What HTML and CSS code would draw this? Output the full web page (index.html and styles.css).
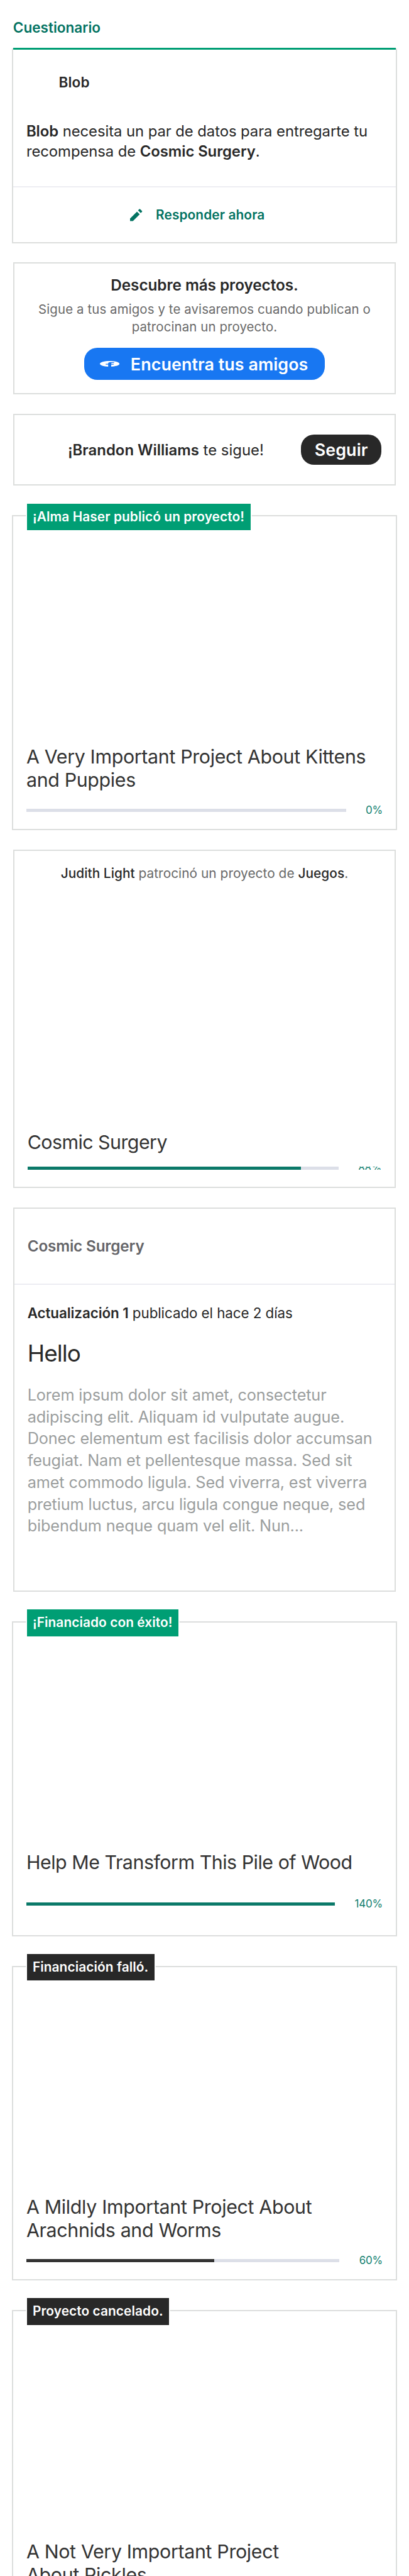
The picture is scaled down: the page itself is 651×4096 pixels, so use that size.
FILE: index.html
```html
<!DOCTYPE html>
<html lang="es">
<head>
<meta charset="utf-8">
<title>Actividad</title>
<link rel="stylesheet" href="styles.css">
</head>
<body>
<main class="feed">
  <h2 class="feed-heading">Cuestionario</h2>

  <section class="card survey">
    <div class="survey-creator">Blob</div>
    <p class="survey-text"><b>Blob</b> necesita un par de datos para entregarte tu<br>recompensa de <b>Cosmic Surgery</b>.</p>
    <div class="survey-action">
      <svg class="pencil" viewBox="0 0 22.5 22.5"><path d="M0 22.5V17.8L12.7 5.1L17.7 10.1L5.3 22.5ZM14.6 2.9L17 .5Q17.7 -.1 18.4 .5L22 4.1Q22.6 4.8 22 5.5L19.6 7.9Z"/></svg>
      <span>Responder ahora</span>
    </div>
  </section>

  <section class="card friends">
    <h3 class="friends-title">Descubre más proyectos.</h3>
    <p class="friends-text">Sigue a tus amigos y te avisaremos cuando publican o<br>patrocinan un proyecto.</p>
    <div class="button facebook">
      <svg class="facebook-icon" viewBox="0 0 24 24" preserveAspectRatio="none"><path d="M24 12.073c0-6.627-5.373-12-12-12s-12 5.373-12 12c0 5.99 4.388 10.954 10.125 11.854v-8.385H7.078v-3.47h3.047V9.43c0-3.007 1.792-4.669 4.533-4.669 1.312 0 2.686.235 2.686.235v2.953H15.83c-1.491 0-1.956.925-1.956 1.874v2.25h3.328l-.532 3.47h-2.796v8.385C19.612 23.027 24 18.062 24 12.073z"/></svg>
      <span>Encuentra tus amigos</span>
    </div>
  </section>

  <section class="card follow">
    <p class="follow-text"><b>¡Brandon Williams</b> te sigue!</p>
    <div class="button dark">Seguir</div>
  </section>

  <section class="card project">
    <div class="badge">¡Alma Haser publicó un proyecto!</div>
    <h3 class="title">A Very Important Project About Kittens<br>and Puppies</h3>
    <div class="progress"><div class="track"></div><span class="percent">0%</span></div>
  </section>

  <section class="card backing">
    <p class="backing-text"><b>Judith Light</b> patrocinó un proyecto de <b>Juegos</b>.</p>
    <h3 class="title">Cosmic Surgery</h3>
    <div class="progress"><div class="track"><div class="fill" style="width:88%"></div></div><span class="percent">88%</span></div>
  </section>

  <section class="card update">
    <div class="update-project">Cosmic Surgery</div>
    <div class="update-content">
      <p class="update-date"><b>Actualización 1</b> publicado el hace 2 días</p>
      <h3 class="update-title">Hello</h3>
      <p class="update-body">Lorem ipsum dolor sit amet, consectetur<br>adipiscing elit. Aliquam id vulputate augue.<br>Donec elementum est facilisis dolor accumsan<br>feugiat. Nam et pellentesque massa. Sed sit<br>amet commodo ligula. Sed viverra, est viverra<br>pretium luctus, arcu ligula congue neque, sed<br>bibendum neque quam vel elit. Nun...</p>
    </div>
  </section>

  <section class="card project single">
    <div class="badge">¡Financiado con éxito!</div>
    <h3 class="title">Help Me Transform This Pile of Wood</h3>
    <div class="progress"><div class="track"><div class="fill" style="width:100%"></div></div><span class="percent">140%</span></div>
  </section>

  <section class="card project">
    <div class="badge ended">Financiación falló.</div>
    <h3 class="title">A Mildly Important Project About<br>Arachnids and Worms</h3>
    <div class="progress"><div class="track"><div class="fill ended" style="width:60%"></div></div><span class="percent">60%</span></div>
  </section>

  <section class="card project">
    <div class="badge ended">Proyecto cancelado.</div>
    <h3 class="title">A Not Very Important Project<br>About Pickles</h3>
  </section>
</main>
</body>
</html>
```
FILE: styles.css
```css
/* 1rem is ten design pixels */
html { font-size: 8.68px; overflow: hidden; }
* { box-sizing: border-box; }
body { margin: 0; height: 4096px; overflow: hidden; background: #fff; color: #282828; font-family: Inter, "Liberation Sans", sans-serif; }
h2, h3, p { margin: 0; font-weight: 400; }
b { font-weight: 600; }
.feed { display: flex; flex-direction: column; white-space: nowrap; }
.feed-heading { height: 8.9rem; padding: 3.4rem 0 0 2.4rem; font-size: 2.6rem; font-weight: 600; line-height: 3.2rem; color: #037362; }

.card { position: relative; flex: none; margin: 0 2.4rem; border: 2px solid #dcdedd; background: #fff; }
.button { display: flex; align-items: center; border-radius: 2.4rem; color: #fff; font-size: 3.1rem; font-weight: 600; letter-spacing: .002em; }

.survey { height: 35.7rem; margin: 0 2.2rem; border-top: 0; padding-top: 4.35rem; }
.survey::before { content: ""; position: absolute; top: -.2rem; left: 0; right: 0; height: .4rem; background: #009e74; }
.survey-creator { padding-left: 8.35rem; font-size: 2.6rem; font-weight: 600; line-height: 3.6rem; letter-spacing: .005em; }
.survey-text { margin-top: 5.4rem; padding: 0 0 4.5rem 2.4rem; font-size: 2.75rem; line-height: 3.7rem; letter-spacing: -.003em; border-bottom: 2px solid #ededf2; }
.survey-action { display: flex; align-items: center; gap: 2.5rem; height: 9.9rem; padding-left: 21.4rem; font-size: 2.4rem; font-weight: 600; letter-spacing: .005em; color: #037362; }
.pencil { width: 2.25rem; height: 2.25rem; fill: currentColor; overflow: visible; }

.friends { display: flex; flex-direction: column; align-items: center; height: 24.2rem; margin-top: 3.4rem; padding-top: 2.36rem; text-align: center; }
.friends-title { font-size: 2.8rem; font-weight: 600; line-height: 3.4rem; letter-spacing: -.002em; }
.friends-text { margin-top: 1.08rem; font-size: 2.35rem; line-height: 3.2rem; letter-spacing: .006em; color: #696969; }
.facebook { gap: 2.05rem; width: 44.2rem; height: 5.9rem; margin-top: 2.26rem; padding-left: 2.9rem; background: #1877f2; }
.facebook-icon { width: 3.6rem; height: 1.03rem; fill: #fff; }

.follow { display: flex; align-items: center; justify-content: space-between; height: 13.2rem; margin-top: 3.6rem; padding: 0 2.4rem 0 9.8rem; }
.follow-text { font-size: 2.75rem; letter-spacing: .001em; }
.dark { justify-content: center; width: 14.8rem; height: 5.6rem; background: #282828; }

.title { font-size: 3.5rem; line-height: 4.3rem; letter-spacing: -.0115em; color: #333; }
.progress { display: flex; align-items: center; gap: 3.6rem; line-height: 2.4rem; }
.track { flex: 1; height: .6rem; background: #dcdfe8; }
.fill { height: 100%; background: #0b7969; }
.fill.ended { background: #333; }
.percent { font-size: 1.96rem; letter-spacing: -.01em; color: #12806f; }

.project { height: 57.7rem; margin: 5.4rem 2.2rem 0; padding: 41.88rem 2.4rem 0; }
.project .progress { margin-top: 2.1rem; }
.single .progress { margin-top: 4.2rem; }
.single .title { letter-spacing: -.016em; }
.badge { position: absolute; top: -2.4rem; left: 2.55rem; padding: 0 1.1rem 0 1rem; background: #009e74; color: #fff; font-size: 2.4rem; font-weight: 600; line-height: 4.9rem; letter-spacing: .004em; box-shadow: 0 0 0 .2rem #fff; }
.badge.ended { background: #282828; }

.backing { height: 61.9rem; margin-top: 3.6rem; padding: 2.53rem 2.4rem 0; }
.backing-text { margin-bottom: 45.45rem; text-align: center; font-size: 2.4rem; line-height: 3.2rem; letter-spacing: .002em; color: #696969; }
.backing-text b { font-weight: 500; color: #282828; }
.backing .title { letter-spacing: -.018em; }
.backing .progress { height: .6rem; margin-top: 2.3rem; overflow: hidden; }

.update { height: 70.4rem; margin-top: 3.6rem; }
.update-project { height: 14rem; padding-left: 2.4rem; border-bottom: 2px solid #ededf2; font-size: 2.8rem; font-weight: 600; line-height: 13.8rem; letter-spacing: -.007em; color: #656569; }
.update-content { padding: 3.4rem 2.4rem 0; }
.update-date { font-size: 2.58rem; line-height: 3.4rem; letter-spacing: -.003em; }
.update-title { margin-top: 3.1rem; font-size: 4.25rem; line-height: 5.2rem; letter-spacing: -.025em; }
.update-body { margin-top: 3.05rem; font-size: 2.91rem; line-height: 4rem; letter-spacing: -.005em; color: #9b9e9e; }
```
